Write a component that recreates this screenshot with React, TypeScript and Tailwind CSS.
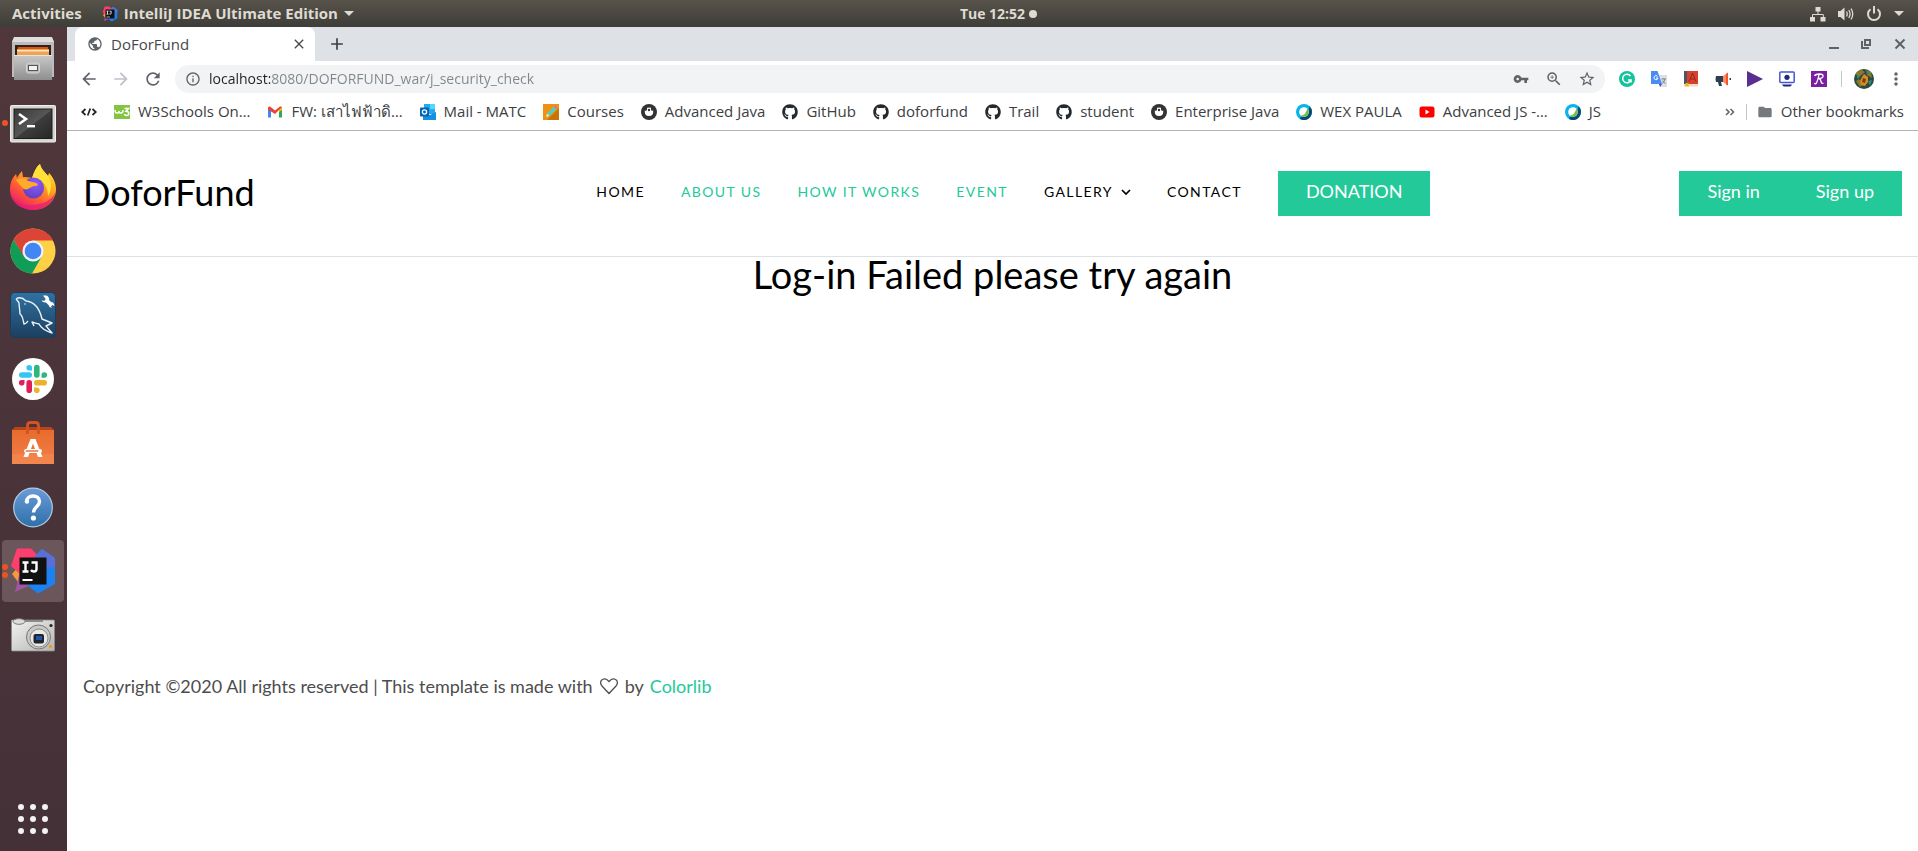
import React from "react";
import {
  MdArrowBack,
  MdArrowForward,
  MdRefresh,
  MdInfoOutline,
  MdVpnKey,
  MdZoomIn,
  MdStarOutline,
  MdMoreVert,
  MdPublic,
  MdClose,
  MdAdd,
  MdFolder,
} from "react-icons/md";
import { FaGithub } from "react-icons/fa";

/* ---------- Dock icons ---------- */

function FilesIcon() {
  return (
    <svg className="size-12" viewBox="0 0 48 48" aria-hidden="true">
      <defs>
        <linearGradient id="cab" x1="0" y1="0" x2="0" y2="1">
          <stop offset="0" stopColor="#c9c9c9" />
          <stop offset="1" stopColor="#8f8f8f" />
        </linearGradient>
      </defs>
      <path d="M5 3h38l2 4v35H3V7z" fill="#bcbcbc" />
      <path d="M5 2h38l2 5H3z" fill="#dedede" />
      <rect x="6" y="10" width="36" height="12" fill="#33221a" />
      <path d="M9 12h30l1 8H8z" fill="#d8541e" />
      <path d="M8 14h32v8H8z" fill="#f1a24d" />
      <rect x="8" y="15" width="32" height="1.500" fill="#fbe3c4" />
      <path d="M5 20h38v25H5z" fill="url(#cab)" />
      <path d="M5 20h38v1H5z" fill="#e4e4e4" />
      <rect x="17.500" y="28" width="13" height="10" rx="2" fill="#b9b9b9" stroke="#d6d6d6" />
      <rect x="19.500" y="30.500" width="9" height="5" fill="#f2f2f2" stroke="#555" />
    </svg>
  );
}

function TerminalIcon() {
  return (
    <svg className="size-12" viewBox="0 0 48 48" aria-hidden="true">
      <defs>
        <linearGradient id="term" x1="0" y1="0" x2="1" y2="1">
          <stop offset="0" stopColor="#3a3a3a" />
          <stop offset=".5" stopColor="#565656" />
          <stop offset=".52" stopColor="#3d3d3d" />
          <stop offset="1" stopColor="#262626" />
        </linearGradient>
      </defs>
      <rect x="1.500" y="6.500" width="45" height="36.500" rx="1" fill="#d4d4d2" stroke="#f0f0ee" />
      <rect x="5" y="10" width="38" height="29.500" fill="url(#term)" stroke="#1c1c1c" />
      <path d="M10 15l7 5-7 5" fill="none" stroke="#fff" strokeWidth="2.600" />
      <rect x="18" y="26" width="8" height="2.400" fill="#fff" />
    </svg>
  );
}

function FirefoxIcon() {
  return (
    <svg className="size-12" viewBox="0 0 48 48" aria-hidden="true">
      <defs>
        <linearGradient id="ffBody" x1=".85" y1=".1" x2=".25" y2="1">
          <stop offset="0" stopColor="#ffe62e" />
          <stop offset=".35" stopColor="#ffa21f" />
          <stop offset=".65" stopColor="#ff5a36" />
          <stop offset="1" stopColor="#e8186f" />
        </linearGradient>
        <radialGradient id="ffCore" cx=".6" cy=".3" r=".8">
          <stop offset="0" stopColor="#9059ff" />
          <stop offset="1" stopColor="#5b3fb5" />
        </radialGradient>
      </defs>
      <path
        d="M31 1c1 5 5 8 8 12l1-3c4 4 7 10 7 16 0 12-10 21-22.500 21S1 38 1 26c0-6 2-11 6-15l1 4c1-2 3-5 5-7l1 6c3 0 6 0 9 1 2-6 4-11 8-14z"
        fill="url(#ffBody)"
      />
      <path d="M31 1c1 5 5 8 8 12 4 6 4 14 0 20 0-7-3-13-8-16l-8-2c2-6 4-11 8-14z" fill="#ffe13a" />
      <path d="M1 30c3 8 12 13 22 12 10 0 20-5 23-12-1 10-11 17-22.500 17S2 39 1 30z" fill="#e61c78" opacity=".75" />
      <circle cx="24.500" cy="25" r="10.500" fill="url(#ffCore)" />
      <path d="M7 17c5-3 9-2 12 1 3 1 6 1 8 2 3 1 2 3-1 3-3 0-5 2-7 3-3 1-5 0-6-2-2-2-4-4-6-7z" fill="#ffab2a" />
    </svg>
  );
}

function ChromeIcon() {
  return (
    <svg className="size-12" viewBox="0 0 48 48" aria-hidden="true">
      <circle cx="24" cy="24" r="22.500" fill="#fdd045" />
      <path d="M4.500 12.800A22.500 22.500 0 0 1 44 13.500H24L14.500 30z" fill="#dc4437" />
      <path d="M4.500 12.800A22.500 22.500 0 0 0 23 46.500L32.500 30 14.800 29.500z" fill="#109d58" />
      <circle cx="24" cy="24" r="10.500" fill="#f1f1f1" />
      <circle cx="24" cy="24" r="8.300" fill="#4286f5" />
    </svg>
  );
}

function WorkbenchIcon() {
  return (
    <svg className="size-12" viewBox="0 0 48 48" aria-hidden="true">
      <defs>
        <linearGradient id="wb" x1="0" y1="0" x2="0" y2="1">
          <stop offset="0" stopColor="#2f72a2" />
          <stop offset="1" stopColor="#1c3f5f" />
        </linearGradient>
      </defs>
      <rect x="1.500" y="1.500" width="45" height="45" rx="4" fill="url(#wb)" stroke="#1b3c5b" />
      <path
        d="M7 8c3-2 7-1 10 2 9 1 14 9 16 18l10 4-6 3 6 7c-6-2-11-5-13-9-3-1-5-1-7-2l2 4M19 30c-1 1-2 3-4 3-1-4-1-8-4-10 0-4-1-8-1-11-1-2-2-3-3-4"
        fill="none"
        stroke="#e9f1f6"
        strokeWidth="1.400"
        strokeLinejoin="round"
      />
      <circle cx="16" cy="13" r=".8" fill="#e9f1f6" />
      <path
        d="M34 4.500l3.500 0q3 1.500 2.500 4.500l2 2q3 0 3.500 4l-2-1-1.500 1.500 1 1.500q-3-.5-3.500-3l-2.500-2.500q-3 .5-4.500-2l3 .2 1.200-1.700z"
        fill="#fff"
      />
    </svg>
  );
}

function SlackIcon() {
  return (
    <svg className="size-12" viewBox="0 0 48 48" aria-hidden="true">
      <circle cx="24" cy="24" r="21" fill="#fff" />
      <g fill="#36c5f0">
        <rect x="10" y="17.200" width="13" height="5.600" rx="2.800" />
        <path d="M23 15.500h-2.800a2.800 2.800 0 1 1 2.800-2.800z" />
      </g>
      <g fill="#2eb67d">
        <rect x="25" y="9.800" width="5.600" height="13" rx="2.800" />
        <path d="M32.500 22.800V20a2.800 2.800 0 1 1 2.800 2.800z" />
      </g>
      <g fill="#ecb22e">
        <rect x="25" y="25" width="13" height="5.600" rx="2.800" />
        <path d="M25 32.500h2.800a2.800 2.800 0 1 1-2.800 2.800z" />
      </g>
      <g fill="#e01e5a">
        <rect x="17.400" y="25" width="5.600" height="13" rx="2.800" />
        <path d="M15.500 25v2.800a2.800 2.800 0 1 1-2.800-2.800z" />
      </g>
    </svg>
  );
}

function SoftwareIcon() {
  return (
    <svg className="size-12" viewBox="0 0 48 48" aria-hidden="true">
      <defs>
        <linearGradient id="bag" x1="0" y1="0" x2="0" y2="1">
          <stop offset="0" stopColor="#e86b2c" />
          <stop offset="1" stopColor="#f1804a" />
        </linearGradient>
      </defs>
      <path d="M3 11l3-3h36l3 3z" fill="#b8441a" />
      <path d="M3 11h42v34H3z" fill="url(#bag)" />
      <path d="M3 35h42v10H3z" fill="#f48a50" opacity=".6" />
      <path d="M18.500 15V6.500q0-3 3-3h5q3 0 3 3V15" fill="none" stroke="#d4531f" strokeWidth="2.800" />
      <path d="M21.500 20h5l7 18H29l-5-13.500L19 38h-4.500z" fill="#fff" />
      <rect x="15" y="30" width="18" height="4" rx="2" fill="#fff" />
      <rect x="16.500" y="31.200" width="13" height="1.600" rx=".8" fill="#ee7436" />
    </svg>
  );
}

function HelpIcon() {
  return (
    <svg className="size-12" viewBox="0 0 48 48" aria-hidden="true">
      <defs>
        <linearGradient id="help" x1="0" y1="0" x2="0" y2="1">
          <stop offset="0" stopColor="#6a9bd8" />
          <stop offset="1" stopColor="#2e70a8" />
        </linearGradient>
      </defs>
      <circle cx="24" cy="24.500" r="19.300" fill="url(#help)" stroke="#b4cbe4" strokeWidth="1.200" />
      <path
        d="M17.500 19c0-4 3-6 6.500-6s6.500 2 6.500 5.500c0 5-6 5.500-6 11"
        fill="none"
        stroke="#fff"
        strokeWidth="3.400"
      />
      <circle cx="17.900" cy="18.500" r="2.200" fill="#fff" />
      <circle cx="24.400" cy="35" r="2.600" fill="#fff" />
    </svg>
  );
}

function IntellijIcon({ className }: { className: string }) {
  return (
    <svg className={className} viewBox="0 0 48 48" aria-hidden="true">
      <path d="M3 27l7-8 8 3-4 16-5-3z" fill="#f59b3a" />
      <path d="M8 1.500h14l10 10-16 20L2 19z" fill="#fc3f6c" />
      <path d="M11 24h11l5 12-21 9z" fill="#a0559f" />
      <path d="M33 2l13 9v26L29 46.500 18 38l10-22-2-7z" fill="#1b82ef" />
      <path d="M33 2l13 9v8L30 24l-4-15z" fill="#5a6fd6" />
      <rect x="10.500" y="10.500" width="27" height="27" fill="#111" />
      <g fill="none" stroke="#fff" strokeWidth="2.400">
        <path d="M13.500 15.500h6M16.500 15.500v9M13.500 24.500h6M22.500 15.500h5v6.500q0 2.500-2.500 2.500-2 0-3-1.500" />
      </g>
      <rect x="13.500" y="32" width="10" height="2" fill="#fff" />
    </svg>
  );
}

function CameraIcon() {
  return (
    <svg className="size-12" viewBox="0 0 48 48" aria-hidden="true">
      <defs>
        <linearGradient id="cam" x1="0" y1="0" x2="1" y2="1">
          <stop offset="0" stopColor="#f2f2f0" />
          <stop offset="1" stopColor="#b4b4b2" />
        </linearGradient>
      </defs>
      <rect x="2.500" y="9" width="43" height="31" rx="1" fill="url(#cam)" stroke="#8b8b89" strokeWidth=".8" />
      <path d="M16 9h18v2H16z" fill="#8a8a88" />
      <ellipse cx="10" cy="10.500" rx="6" ry="2.800" fill="#dcdcda" stroke="#777" />
      <circle cx="29.500" cy="26" r="12" fill="#c8c8c6" stroke="#777" />
      <circle cx="30" cy="27" r="9" fill="#e8e8e6" stroke="#8c8c8a" />
      <rect x="24.500" y="23" width="10.500" height="9.500" rx="2" fill="#20242b" />
      <rect x="27" y="25" width="6" height="4" fill="#1f55a8" />
      <circle cx="42" cy="14.500" r="1.600" fill="#222" />
      <rect x="40" y="34" width="3" height="3" fill="#f09a1e" />
    </svg>
  );
}

type DockItem = { name: string; icon: React.ReactNode; windows?: number; active?: boolean };

const dockItems: DockItem[] = [
  { name: "Files", icon: <FilesIcon /> },
  { name: "Terminal", icon: <TerminalIcon />, windows: 1 },
  { name: "Firefox", icon: <FirefoxIcon /> },
  { name: "Chrome", icon: <ChromeIcon /> },
  { name: "MySQL Workbench", icon: <WorkbenchIcon /> },
  { name: "Slack", icon: <SlackIcon /> },
  { name: "Ubuntu Software", icon: <SoftwareIcon /> },
  { name: "Help", icon: <HelpIcon /> },
  { name: "IntelliJ IDEA", icon: <IntellijIcon className="size-12" />, windows: 2, active: true },
  { name: "Screenshot", icon: <CameraIcon /> },
];

function Dock() {
  return (
    <aside className="flex w-[67px] shrink-0 flex-col justify-between bg-linear-to-b from-[#50373c] to-[#443137] px-0.5 pt-px pb-px">
      <div className="flex flex-col gap-0.5">
        {dockItems.map((item) => (
          <button
            key={item.name}
            type="button"
            aria-label={item.name}
            className={
              item.active
                ? "relative flex h-[62px] w-[62px] items-center justify-center rounded bg-[#6a565b]"
                : "relative flex h-[62px] w-[62px] items-center justify-center"
            }
          >
            {item.windows && (
              <span className="absolute inset-y-0 left-0 flex flex-col items-center justify-center gap-0.5">
                {Array.from({ length: item.windows }, (_, i) => (
                  <span key={i} className="size-1.5 rounded-full bg-[#e95420]" />
                ))}
              </span>
            )}
            {item.icon}
          </button>
        ))}
      </div>
      <button type="button" aria-label="Show applications" className="flex h-[62px] w-[62px] items-center justify-center">
        <svg className="size-8" viewBox="0 0 32 32" fill="#f2f2f2" aria-hidden="true">
          {[4, 16, 28].map((y) => [4, 16, 28].map((x) => <circle key={`${x}-${y}`} cx={x} cy={y} r="3" />))}
        </svg>
      </button>
    </aside>
  );
}

/* ---------- Top system bar ---------- */

function TopBar() {
  return (
    <header className="grid h-[27px] shrink-0 grid-cols-[12fr_auto_11fr] items-center bg-linear-to-b from-[#57534a] to-[#3e3d38] px-3 font-['Open_Sans','Noto_Sans',sans-serif] text-[15px] font-bold text-[#dfdbd2]">
      <div className="flex items-center gap-5">
        <button type="button">Activities</button>
        <button type="button" className="flex items-center gap-1.5">
          <IntellijIcon className="size-4" />
          IntelliJ IDEA Ultimate Edition
          <svg className="h-1.5 w-2.5" viewBox="0 0 10 6" fill="currentColor" aria-hidden="true">
            <path d="M0 0h10L5 5z" />
          </svg>
        </button>
      </div>
      <button type="button" className="flex items-center gap-1 text-sm font-bold">
        Tue 12:52
        <span className="size-2 rounded-full bg-[#dfdbd2]" />
      </button>
      <button type="button" aria-label="System menu" className="mr-0.5 flex items-center gap-3 justify-self-end">
        <svg className="size-4" viewBox="0 0 16 16" fill="currentColor" aria-hidden="true">
          <path d="M5.500 1h5v4.500h-5zM0 11h5v4.500H0zM10.500 11h5v4.500h-5z" />
          <path d="M8 5v3.500M2.500 11V8.500h10.800V11" fill="none" stroke="currentColor" />
        </svg>
        <svg className="size-4" viewBox="0 0 16 16" fill="currentColor" aria-hidden="true">
          <path d="M0 5h2.500L6.500 1.500v13L2.500 11H0z" />
          <path
            d="M8.500 5.500q1.500 2.500 0 5M10.800 4q2.500 4 0 8M13 2.500q3.500 5.500 0 11"
            fill="none"
            stroke="currentColor"
            strokeWidth="1.300"
          />
        </svg>
        <svg className="size-4" viewBox="0 0 16 16" fill="none" stroke="currentColor" strokeWidth="2" aria-hidden="true">
          <path d="M4.500 3.200a6 6 0 1 0 7 0M8 0v7.500" />
        </svg>
        <svg className="h-1.5 w-2.5" viewBox="0 0 10 6" fill="currentColor" aria-hidden="true">
          <path d="M0 0h10L5 5z" />
        </svg>
      </button>
    </header>
  );
}

/* ---------- Browser chrome ---------- */

function TabStrip() {
  return (
    <div className="flex h-[34px] shrink-0 items-center justify-between bg-[#dee1e6] pr-2.5 pl-2 text-[#5f6368]">
      <div className="flex h-full items-center">
        <div className="flex h-full w-60 items-center gap-2 rounded-t-lg bg-white pr-2 pl-3 text-[#45494d]">
          <MdPublic className="size-4 text-[#5f6368]" />
          <span className="flex-1 text-[15px]">DoForFund</span>
          <button type="button" aria-label="Close tab">
            <MdClose className="size-4" />
          </button>
        </div>
        <button type="button" aria-label="New tab" className="ml-3 text-[#3c4043]">
          <MdAdd className="size-5" />
        </button>
      </div>
      <div className="flex items-center gap-5">
        <button type="button" aria-label="Minimize">
          <svg className="size-3" viewBox="0 0 12 12" fill="currentColor" aria-hidden="true">
            <path d="M1 9h10v2H1z" />
          </svg>
        </button>
        <button type="button" aria-label="Restore">
          <svg className="size-3" viewBox="0 0 12 12" fill="none" stroke="currentColor" strokeWidth="2" aria-hidden="true">
            <path d="M5 2h5v5H5zM2 3v7h7" />
          </svg>
        </button>
        <button type="button" aria-label="Close">
          <svg className="size-4" viewBox="0 0 16 16" fill="none" stroke="currentColor" strokeWidth="2" aria-hidden="true">
            <path d="M3.500 3.500l9 9M12.500 3.500l-9 9" />
          </svg>
        </button>
      </div>
    </div>
  );
}

const extensions: { name: string; icon: React.ReactNode }[] = [
  {
    name: "Grammarly",
    icon: (
      <svg className="size-4" viewBox="0 0 16 16" aria-hidden="true">
        <circle cx="8" cy="8" r="8" fill="#15c39a" />
        <path d="M11.500 5A4.300 4.300 0 1 0 12 9H9M12 9v2.500" fill="none" stroke="#fff" strokeWidth="1.500" />
      </svg>
    ),
  },
  {
    name: "Translate",
    icon: (
      <svg className="size-4" viewBox="0 0 16 16" aria-hidden="true">
        <path d="M6 4h10v12H9z" fill="#dcdfe3" />
        <path d="M0 0h6.500L11 13H0z" fill="#4b8bf4" />
        <path d="M8 13h3l-2 3z" fill="#2a56c6" />
        <path d="M6.500 5.300A2 2 0 1 0 7 7H5" fill="none" stroke="#fff" />
        <path d="M10.500 8h4.500M12.800 7v1M14 8q-.5 3-3 4.500M11.500 9.500q1 2 3 3" fill="none" stroke="#6f7d8c" strokeWidth=".9" />
      </svg>
    ),
  },
  {
    name: "Dictionary",
    icon: (
      <svg className="size-4" viewBox="0 0 16 16" aria-hidden="true">
        <path d="M1 0h14v13H1z" fill="#d8402f" />
        <path d="M1 0h3v13H1z" fill="#4b5563" />
        <path d="M1 13h14v2.500H1z" fill="#ecdcc5" />
        <path d="M6 10.500L9.500 2l3.500 8.500M7.200 8h4.500" fill="none" stroke="#96261a" />
        <path d="M2.500 12h3v4L4 15l-1.500 1z" fill="#f4b400" />
      </svg>
    ),
  },
  {
    name: "Megaphone",
    icon: (
      <svg className="size-4" viewBox="0 0 16 16" aria-hidden="true">
        <path d="M1 5h7v6H6l1 4H4l-1-4H1q-1-3 0-6z" fill="#2c3e50" />
        <path d="M8 5l5-3.500v13L8 11z" fill="#ff8a5c" />
        <path d="M11 3v10.500l2 1v-13z" fill="#f4562c" />
        <path d="M14.500 7h1.500v2h-1.500z" fill="#2c3e50" />
      </svg>
    ),
  },
  {
    name: "Player",
    icon: (
      <svg className="size-4" viewBox="0 0 16 16" aria-hidden="true">
        <path d="M0 0l16 8-16 8z" fill="#5b2d90" />
      </svg>
    ),
  },
  {
    name: "Screen recorder",
    icon: (
      <svg className="size-4" viewBox="0 0 16 16" aria-hidden="true">
        <rect x=".8" y="1" width="14.400" height="10.500" rx="1" fill="#fff" stroke="#4355db" strokeWidth="1.500" />
        <circle cx="8" cy="6.300" r="2.600" fill="#1c2a78" />
        <path d="M3 13.500h10q-1 2-2 2H5q-1 0-2-2z" fill="#1c2a78" />
      </svg>
    ),
  },
  {
    name: "Rakuten",
    icon: (
      <svg className="size-4" viewBox="0 0 16 16" aria-hidden="true">
        <rect width="16" height="16" fill="#7a1fa2" />
        <path
          d="M3.500 5q1-2 5-2 4 0 3.500 2.500-.5 2-4.500 2 2 0 2.500 3 .5 2.500 2.500 1.500M8 3.500Q7 9 5.500 12q-1.500 1.500-2 0"
          fill="none"
          stroke="#fff"
          strokeWidth="1.300"
        />
      </svg>
    ),
  },
];

function Toolbar() {
  return (
    <div className="flex h-9 shrink-0 items-center pr-3 pl-3 text-[#5f6368]">
      <div className="flex items-center gap-3">
        <button type="button" aria-label="Back">
          <MdArrowBack className="size-5" />
        </button>
        <button type="button" aria-label="Forward" className="text-[#bdc1c6]">
          <MdArrowForward className="size-5" />
        </button>
        <button type="button" aria-label="Reload">
          <MdRefresh className="size-5" />
        </button>
      </div>
      <div className="ml-3 flex h-7 flex-1 items-center gap-2 rounded-full bg-[#f1f3f4] px-2.5">
        <MdInfoOutline className="size-4" />
        <input
          type="text"
          aria-label="Address"
          defaultValue="localhost:8080/DOFORFUND_war/j_security_check"
          className="min-w-0 flex-1 bg-[linear-gradient(90deg,#202124_61px,#80868b_61px)] bg-clip-text text-sm text-transparent outline-none"
        />
        <div className="flex items-center gap-4">
          <button type="button" aria-label="Passwords">
            <MdVpnKey className="size-4" />
          </button>
          <button type="button" aria-label="Zoom">
            <MdZoomIn className="size-[18px]" />
          </button>
          <button type="button" aria-label="Bookmark this page" className="-mx-px">
            <MdStarOutline className="size-[18px]" />
          </button>
        </div>
      </div>
      <div className="ml-3.5 flex items-center gap-4">
        {extensions.map((e) => (
          <button key={e.name} type="button" aria-label={e.name}>
            {e.icon}
          </button>
        ))}
      </div>
      <div className="ml-3.5 h-4 w-px bg-[#c4c7cb]" />
      <button type="button" aria-label="Profile" className="ml-3">
        <svg className="size-5 rounded-full" viewBox="0 0 20 20" aria-hidden="true">
          <rect width="20" height="20" fill="#2b4a42" />
          <path d="M0 4l6-4 5 3-6 5zM12 1l5 2 1 6-5-3zM2 12l4 6 3-2-4-6z" fill="#8a7a2d" />
          <path d="M8 8l2-3 4 3 0 5-3 4-4-1-1-4z" fill="#d98c1f" />
          <path d="M9 9l3 1-1 4-3-1z" fill="#7a3d12" />
          <path d="M14 12l4-1-2 6zM3 5l3 3-3 2zM13 2l3 3-3 0z" fill="#2c8a7d" />
        </svg>
      </button>
      <button type="button" aria-label="Menu" className="ml-3">
        <MdMoreVert className="size-5" />
      </button>
    </div>
  );
}

function JavaMark() {
  return (
    <svg className="size-4" viewBox="0 0 16 16" aria-hidden="true">
      <circle cx="8" cy="8" r="8" fill="#333" />
      <path d="M3.800 6.500q1.700.6 2.200-.5Q5.500 4 7 3.300L8 4l1-.7q1.500.7 1 2.700.5 1.100 2.200.5.500 5.500-4.200 5.500T3.800 6.500z" fill="#fff" />
      <circle cx="8" cy="6" r="1.200" fill="#333" />
    </svg>
  );
}

function WebexMark() {
  return (
    <svg className="size-4" viewBox="0 0 16 16" aria-hidden="true">
      <circle cx="8" cy="8" r="8" fill="#07b5e8" />
      <path d="M13.500 2.200A8 8 0 0 1 4.500 15.200Q3.500 14 5 13q7-1 8.500-10.800z" fill="#0a4a70" />
      <circle cx="8" cy="8" r="4.800" fill="#fff" />
      <path d="M11.400 4.300Q13.500 6.500 12.500 9.500 11 12.800 7.500 12.800q-2 0-3-1 5.500-.5 6.900-7.500z" fill="#6fc043" />
    </svg>
  );
}

const gh = <FaGithub className="size-4 text-[#24292e]" />;

const bookmarks: { label: string; icon: React.ReactNode }[] = [
  {
    label: "W3Schools On…",
    icon: (
      <svg className="size-4" viewBox="0 0 16 16" aria-hidden="true">
        <rect y="1" width="16" height="14" fill="#83c441" />
        <path
          d="M1 6q0 3 2 3t2-2q0 2 2 2t2-3M10.500 4.500h4L12 7.200q2.800 0 2.800 2.300 0 2-2.200 2-1.800 0-2.300-1.500"
          fill="none"
          stroke="#fff"
          strokeWidth="1.500"
        />
      </svg>
    ),
  },
  {
    label: "FW: เสาไฟฟ้าดิ…",
    icon: (
      <svg className="size-4" viewBox="0 0 16 16" aria-hidden="true">
        <path d="M1 4v9.500h3V6z" fill="#4285f4" />
        <path d="M15 4v9.500h-3V6z" fill="#34a853" />
        <path d="M12 4l3-1.500V6l-3 2z" fill="#fbbc04" />
        <path d="M1 4q0-2 2-1.500L8 6.500l5-4q1-.3 2 .5L8 10 1 5.500z" fill="#ea4335" />
      </svg>
    ),
  },
  {
    label: "Mail - MATC",
    icon: (
      <svg className="size-4" viewBox="0 0 16 16" aria-hidden="true">
        <path d="M4 0h11v10H4z" fill="#28a8ea" />
        <path d="M10 0h5v5h-5z" fill="#50d9ff" />
        <path d="M3 8l7 3 6-3v8H3z" fill="#1490df" />
        <rect y="3.500" width="9" height="9" rx=".8" fill="#0364b8" />
        <circle cx="4.500" cy="8" r="2.100" fill="none" stroke="#fff" strokeWidth="1.300" />
      </svg>
    ),
  },
  {
    label: "Courses",
    icon: (
      <svg className="size-4" viewBox="0 0 16 16" aria-hidden="true">
        <rect width="16" height="16" fill="#f29111" />
        <path d="M16 4v12H4z" fill="#c97408" />
        <path d="M3 13l1-3.500 7-7 2.500 2.500-7 7z" fill="#4fd0c0" />
        <path d="M11 2.500L13.500 5l1-1L12 1.500z" fill="#f06292" />
        <path d="M3 13l1-3.500L6.500 12z" fill="#fbe3b0" />
      </svg>
    ),
  },
  { label: "Advanced Java", icon: <JavaMark /> },
  { label: "GitHub", icon: gh },
  { label: "doforfund", icon: gh },
  { label: "Trail", icon: gh },
  { label: "student", icon: gh },
  { label: "Enterprise Java", icon: <JavaMark /> },
  { label: "WEX PAULA", icon: <WebexMark /> },
  {
    label: "Advanced JS -…",
    icon: (
      <svg className="size-4" viewBox="0 0 16 16" aria-hidden="true">
        <rect x=".5" y="2.500" width="15" height="11" rx="2.500" fill="#f00" />
        <path d="M6.500 5.500v5l4-2.500z" fill="#fff" />
      </svg>
    ),
  },
  { label: "JS", icon: <WebexMark /> },
];

function BookmarkBar() {
  return (
    <nav
      aria-label="Bookmarks"
      className="flex h-[34px] shrink-0 items-center justify-between border-b border-[#b3b3b3] px-3.5 pb-1 text-[15px] whitespace-nowrap text-[#3c4043]"
    >
      <div className="flex items-center gap-[17px]">
        <a href="#code" aria-label="Code">
          <svg className="size-4" viewBox="0 0 16 16" fill="none" stroke="#202124" strokeWidth="1.700" aria-hidden="true">
            <path d="M4.500 5L1.200 8l3.300 3M11.500 5l3.300 3-3.300 3M9.300 4.500l-2.600 7" />
          </svg>
        </a>
        {bookmarks.map((b) => (
          <a key={b.label} href="#bookmark" className="flex items-center gap-2">
            {b.icon}
            {b.label}
          </a>
        ))}
      </div>
      <div className="flex items-center">
        <button type="button" aria-label="More bookmarks">
          <svg className="size-3" viewBox="0 0 12 12" fill="none" stroke="#5f6368" strokeWidth="1.500" aria-hidden="true">
            <path d="M2 3l3 3-3 3M6.500 3l3 3-3 3" />
          </svg>
        </button>
        <div className="mx-2.5 h-4 w-px bg-[#c4c7cb]" />
        <a href="#other" className="flex items-center gap-2">
          <MdFolder className="size-4 text-[#75797d]" />
          Other bookmarks
        </a>
      </div>
    </nav>
  );
}

/* ---------- Web page ---------- */

const navLinks = [
  { label: "HOME", accent: false, menu: false },
  { label: "ABOUT US", accent: true, menu: false },
  { label: "HOW IT WORKS", accent: true, menu: false },
  { label: "EVENT", accent: true, menu: false },
  { label: "GALLERY", accent: false, menu: true },
  { label: "CONTACT", accent: false, menu: false },
];

function SiteHeader() {
  return (
    <header className="flex items-center border-b border-[#dee2e6] px-4 py-10 text-black">
      <a href="#home" className="w-[28%] shrink-0 self-start text-4xl leading-[42px]">
        DoforFund
      </a>
      <nav aria-label="Main" className="flex flex-1 items-center gap-9 pl-1">
        {navLinks.map((l) => (
          <a
            key={l.label}
            href="#section"
            className={
              l.accent
                ? "flex items-center gap-2 pb-1 text-sm tracking-widest whitespace-nowrap text-[#24c99a]"
                : "flex items-center gap-2 pb-1 text-sm tracking-widest whitespace-nowrap"
            }
          >
            {l.label}
            {l.menu && (
              <svg className="size-2.5" viewBox="0 0 10 10" fill="none" stroke="currentColor" strokeWidth="1.700" aria-hidden="true">
                <path d="M1 3l4 4 4-4" />
              </svg>
            )}
          </a>
        ))}
        <a href="#donate" className="bg-[#24c99a] px-7 pt-2 pb-3 text-lg leading-[25px] text-white">
          DONATION
        </a>
      </nav>
      <div className="flex bg-[#24c99a] text-lg leading-[25px] text-white">
        <a href="#signin" className="px-7 pt-2 pb-3">
          Sign in
        </a>
        <a href="#signup" className="px-7 pt-2 pb-3">
          Sign up
        </a>
      </div>
    </header>
  );
}

export default function App() {
  return (
    <div className="flex min-h-screen flex-col bg-white">
      <TopBar />
      <div className="flex flex-1">
        <Dock />
        <div className="flex min-w-0 flex-1 flex-col">
          <div className="font-['Open_Sans','Noto_Sans',sans-serif]">
            <TabStrip />
            <Toolbar />
            <BookmarkBar />
          </div>
          <div className="flex flex-1 flex-col font-['Lato',sans-serif]">
            <SiteHeader />
            <main className="flex-1">
              <h1 className="text-center text-[38px] leading-[34px] text-black">Log-in Failed please try again</h1>
            </main>
            <footer className="px-4 pb-37 text-lg leading-[34px] text-[#4d4d4d]">
              <p className="flex items-center gap-1.5">
                Copyright ©2020 All rights reserved | This template is made with
                <svg className="size-5" viewBox="0 0 20 20" fill="none" stroke="currentColor" strokeWidth="1.300" aria-label="love">
                  <path d="M10 17.500L3 10Q.5 7 2.500 4.200 6 1 10 5.500 14 1 17.500 4.200 19.500 7 17 10z" />
                </svg>
                by
                <a href="#colorlib" className="text-[#24c99a]">
                  Colorlib
                </a>
              </p>
            </footer>
          </div>
        </div>
      </div>
    </div>
  );
}
